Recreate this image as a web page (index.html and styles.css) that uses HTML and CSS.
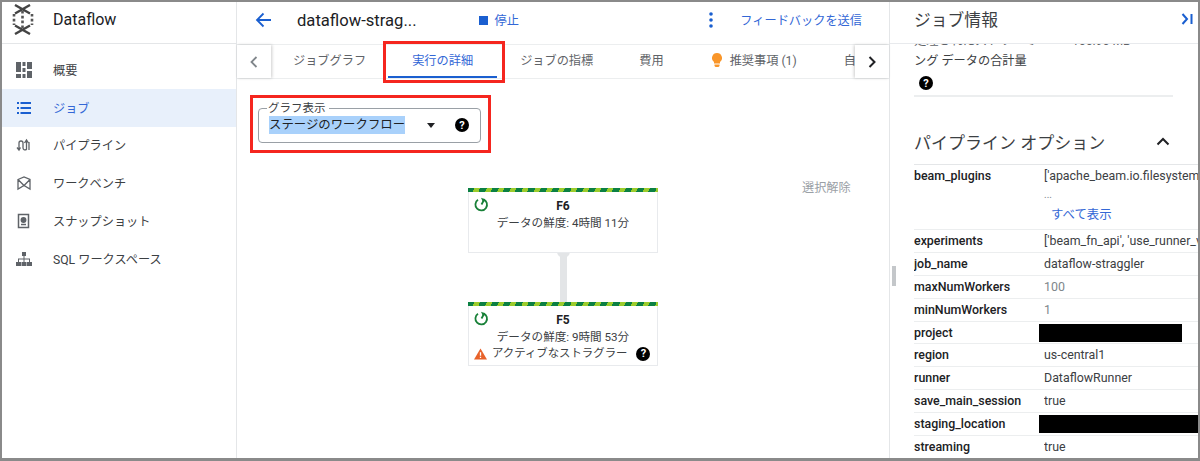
FILE: index.html
```html
<!DOCTYPE html>
<html lang="ja">
<head>
<meta charset="utf-8">
<title>Dataflow</title>
<link rel="stylesheet" href="styles.css">
</head>
<body>
<div class="frame">
  <aside class="sidebar">
    <div class="brand">
      <svg class="logo" width="22" height="31" viewBox="0 0 22 31"><path d="M3 1l15 8.500M18 1L3 9.500M3 30l15-8.500M18 30L3 21.500" stroke="#444" stroke-width="2.400" fill="none"/><path d="M2 10v11M20 10v11M10.500 7v17" stroke="#555" stroke-width="2.600" stroke-dasharray="2.600 2.200" fill="none"/></svg>
      <span class="brand-name">Dataflow</span>
    </div>
    <nav class="nav">
      <a class="nav-item"><svg width="16" height="16" viewBox="0 0 16 16" fill="#5f6368"><path d="M0 0h5v10H0zM0 12h5v4H0zM6.500 0h3v4h-3zM6.500 6h3v4h-3zM6.500 12h3v4h-3zM11 0h5v7h-5zM11 9h5v7h-5z"/></svg><span>概要</span></a>
      <a class="nav-item active"><svg width="16" height="16" viewBox="0 0 16 16" fill="#1a5fd0"><path d="M1 2h2v2H1zM1 7h2v2H1zM1 12h2v2H1zM4.500 2H15v2H4.500zM4.500 7H15v2H4.500zM4.500 12H15v2H4.500z"/></svg><span>ジョブ</span></a>
      <a class="nav-item"><svg width="16" height="16" viewBox="0 0 16 16" fill="none" stroke="#5f6368" stroke-width="1.300"><path d="M1 10.500l2 2.500 1.500-2.500M3 12V6a2 2 0 0 1 4 0v5a2 2 0 0 0 3.500 1.200V4M8.500 6l2-3 2 3"/><path d="M13 5v8"/></svg><span>パイプライン</span></a>
      <a class="nav-item"><svg width="16" height="16" viewBox="0 0 16 16" fill="none" stroke="#5f6368" stroke-width="1.300"><path d="M2 4.500L8 2l6 2.500V14L8 10.500 2 14zM2 4.500L8 10.500l6-6"/></svg><span>ワークベンチ</span></a>
      <a class="nav-item"><svg width="16" height="16" viewBox="0 0 16 16" fill="none" stroke="#5f6368" stroke-width="1.500"><rect x="2.500" y="1.500" width="10" height="13"/><circle cx="7.500" cy="7" r="2.200" fill="#5f6368"/><path d="M5 11.500h5"/></svg><span>スナップショット</span></a>
      <a class="nav-item"><svg width="16" height="16" viewBox="0 0 16 16" fill="#5f6368"><path d="M6 1h4v4H6zM7.500 5h1v3h-1zM2 7.500h12v1H2zM2 8h1v3H2zM7.500 8h1v3h-1zM13 8h1v3h-1zM0 11h5v4H0zM5.500 11h5v4h-5zM11 11h5v4h-5z"/></svg><span>SQL ワークスペース</span></a>
    </nav>
  </aside>

  <main class="main">
    <header class="topbar">
      <svg class="back" width="16" height="16" viewBox="0 0 16 16" fill="none" stroke="#1a5fd0" stroke-width="1.800"><path d="M16 8H2M8.500 1.500L2 8l6.500 6.500"/></svg>
      <h1 class="job-title">dataflow-strag...</h1>
      <span class="stop"><i class="stop-box"></i>停止</span>
      <span class="spacer"></span>
      <svg class="more" width="4" height="16" viewBox="0 0 4 16" fill="#1a5fd0"><circle cx="2" cy="2" r="1.800"/><circle cx="2" cy="8" r="1.800"/><circle cx="2" cy="14" r="1.800"/></svg>
      <span class="feedback">フィードバックを送信</span>
    </header>

    <div class="tabs">
      <div class="tab-nav left"><svg width="8" height="12" viewBox="0 0 8 12" fill="none" stroke="#80868b" stroke-width="1.800"><path d="M6.500 1L1.500 6l5 5"/></svg></div>
      <div class="tab-list">
        <span class="tab t1">ジョブグラフ</span>
        <span class="tab t2 current">実行の詳細</span>
        <span class="tab t3">ジョブの指標</span>
        <span class="tab t4">費用</span>
        <span class="tab t5"><svg width="10" height="14" viewBox="0 0 10 14" fill="#f9962a"><path d="M5 0a5 5 0 0 1 3 9v1.500H2V9a5 5 0 0 1 3-9zM2.500 11.500h5V13l-1 1h-3l-1-1z"/></svg>推奨事項 (1)</span>
        <span class="tab t6">自</span>
      </div>
      <div class="tab-nav right"><svg width="8" height="12" viewBox="0 0 8 12" fill="none" stroke="#202124" stroke-width="2"><path d="M1.500 1l5 5-5 5"/></svg></div>
    </div>

    <section class="canvas">
      <fieldset class="graph-select">
        <legend>グラフ表示</legend>
        <span class="selected">ステージのワークフロー</span>
        <i class="caret"></i>
        <span class="help help-select">?</span>
      </fieldset>
      <span class="deselect">選択解除</span>

      <div class="connector"></div>
      <article class="stage stage-f6">
        <svg class="stage-icon" width="15" height="15" viewBox="0 0 15 15" fill="none" stroke="#188038" stroke-width="1.800"><path d="M9.500 2.300A5.800 5.800 0 1 1 4 2.800M7.500 7.500L10 3"/><path d="M7 .8l4 1.500-2 3z" fill="#188038" stroke="none"/></svg>
        <div class="stage-name">F6</div>
        <div class="stage-line">データの鮮度: 4時間 11分</div>
      </article>
      <article class="stage stage-f5">
        <svg class="stage-icon" width="15" height="15" viewBox="0 0 15 15" fill="none" stroke="#188038" stroke-width="1.800"><path d="M9.500 2.300A5.800 5.800 0 1 1 4 2.800M7.500 7.500L10 3"/><path d="M7 .8l4 1.500-2 3z" fill="#188038" stroke="none"/></svg>
        <div class="stage-name">F5</div>
        <div class="stage-line">データの鮮度: 9時間 53分</div>
        <div class="stage-warn"><svg width="13" height="12" viewBox="0 0 14 12"><path d="M7 0l7 12H0z" fill="#e8622a"/><path d="M6.300 4h1.400v4H6.300zM6.300 9h1.400v1.400H6.300z" fill="#fff"/></svg><span>アクティブなストラグラー</span><span class="help help-warn">?</span></div>
      </article>

      <div class="mark mark-tab"></div>
      <div class="mark mark-select"></div>
    </section>
  </main>

  <aside class="panel">
    <i class="grip"></i>
    <header class="panel-head">
      <h2>ジョブ情報</h2>
      <svg width="12" height="12" viewBox="0 0 12 12" fill="none" stroke="#1a5fd0" stroke-width="2"><path d="M1.500 1l4.500 5-4.500 5M10.500 1v10"/></svg>
    </header>
    <div class="panel-body">
      <div class="summary">
        <div class="summary-row"><span class="summary-key">処理されたストリーミ</span><span>166.96 MB</span></div>
        <div>ング データの合計量</div>
        <span class="help help-summary">?</span>
      </div>
      <div class="opt-head">
        <h3>パイプライン オプション</h3>
        <svg width="14" height="9" viewBox="0 0 14 9" fill="none" stroke="#202124" stroke-width="2"><path d="M1.500 7.500L7 2l5.500 5.500"/></svg>
      </div>
      <dl class="options">
        <div class="row row-tall"><dt>beam_plugins</dt><dd>['apache_beam.io.filesystem<div class="dots">...</div><a class="show-all">すべて表示</a></dd></div>
        <div class="row"><dt>experiments</dt><dd>['beam_fn_api', 'use_runner_v2']</dd></div>
        <div class="row"><dt>job_name</dt><dd>dataflow-straggler</dd></div>
        <div class="row"><dt>maxNumWorkers</dt><dd class="muted">100</dd></div>
        <div class="row"><dt>minNumWorkers</dt><dd class="muted">1</dd></div>
        <div class="row"><dt>project</dt><dd class="cell-redact"><i class="redact redact-a"></i></dd></div>
        <div class="row"><dt>region</dt><dd>us-central1</dd></div>
        <div class="row"><dt>runner</dt><dd>DataflowRunner</dd></div>
        <div class="row"><dt>save_main_session</dt><dd>true</dd></div>
        <div class="row"><dt>staging_location</dt><dd class="cell-redact"><i class="redact redact-b"></i></dd></div>
        <div class="row"><dt>streaming</dt><dd>true</dd></div>
      </dl>
    </div>
  </aside>
</div>
</body>
</html>
```
FILE: styles.css
```css
* { box-sizing: border-box; }
html, body { margin: 0; height: 100%; }
body {
  font-family: Roboto, "Noto Sans CJK JP", sans-serif;
  font-size: 12.2px;
  color: #3c4043;
  background: #fff;
  overflow: hidden;
}
h1, h2, h3, dl, dd { margin: 0; font-weight: 400; }

.frame {
  display: flex;
  width: 1200px;
  height: 461px;
  border: solid #8a8a8a;
  border-width: 2px 2px 3px 2px;
  overflow: hidden;
}

/* sidebar */
.sidebar { flex: 0 0 235px; border-right: 1px solid #e4e6e8; }
.brand { display: flex; align-items: center; height: 42px; border-bottom: 1px solid #e4e6e8; padding: 0 0 6px 10px; }
.logo { flex: none; }
.brand-name { margin-left: 19px; font-size: 16px; color: #202124; }
.nav { padding-top: 7px; }
.nav-item { display: flex; align-items: center; gap: 21px; height: 37.8px; padding-left: 14px; color: #3c4043; }
.nav-item svg { flex: none; }
.nav-item.active { background: #e8f0fb; color: #3367d6; }

/* main */
.main { flex: 0 0 653px; border-right: 1px solid #e4e6e8; display: flex; flex-direction: column; min-width: 0; }
.topbar { display: flex; align-items: center; height: 42px; padding: 0 0 6px 18px; flex: none; }
.back { flex: none; }
.job-title { margin-left: 26px; font-size: 16.6px; color: #202124; white-space: nowrap; }
.stop { margin-left: 62px; display: flex; align-items: center; gap: 7px; color: #3367d6; }
.stop-box { width: 9px; height: 9px; background: #1a5fd0; }
.spacer { flex: 1; }
.more { flex: none; }
.feedback { margin-left: 27px; margin-right: 27px; color: #3367d6; }

.tabs { display: flex; align-items: stretch; height: 35px; flex: none; border-top: 1px solid #eceeef; border-bottom: 1px solid #eceeef; }
.tab-nav { flex: none; width: 34px; display: flex; align-items: center; justify-content: center; background: #fff; }
.tab-nav.left { box-shadow: 1px 0 3px rgba(0,0,0,.2); }
.tab-nav.right { box-shadow: -1px 0 3px rgba(0,0,0,.2); }
.tab-list { flex: 1; display: flex; align-items: center; overflow: hidden; white-space: nowrap; color: #5f6368; }
.tab { display: flex; align-items: center; gap: 8px; flex: none; height: 100%; padding-bottom: 3px; }
.t1 { margin-left: 22px; }
.t2 { margin-left: 22px; width: 109px; justify-content: center; color: #3367d6; border-bottom: 2px solid #1a5fd0; padding-bottom: 1px; }
.t3 { margin-left: 23px; }
.t4 { margin-left: 46px; }
.t5 { margin-left: 48px; }
.t6 { margin-left: 47px; }

.canvas { position: relative; flex: 1; }
.graph-select {
  position: absolute; left: 21px; top: 24px;
  width: 223px; height: 40px; margin: 0; padding: 0 8px;
  border: 1px solid #9aa0a6; border-radius: 4px;
  color: #202124;
}
.graph-select legend { padding: 0 3px 0 1px; font-size: 11.5px; line-height: 10px; color: #3c4043; }
.selected { position: absolute; left: 10px; top: 3px; display: inline-block; background: #a9d1fb; line-height: 18px; font-size: 12.4px; white-space: nowrap; }
.caret { position: absolute; left: 168px; top: 9.5px; border: solid transparent; border-width: 5px 4.5px 0; border-top-color: #202124; }
.help {
  display: inline-flex; align-items: center; justify-content: center;
  width: 14px; height: 14px; border-radius: 50%; background: #000; color: #fff;
  font-size: 11px; font-weight: 700; line-height: 1; flex: none;
}
.help-select { position: absolute; left: 196px; top: 5px; }
.deselect { position: absolute; left: 565px; top: 99px; color: #9aa0a6; }

.stage {
  position: absolute; left: 231px; width: 190px; height: 64px;
  background: #fff; border: 1px solid #e8eaed; border-top: 0;
  text-align: center; color: #3c4043; font-size: 11.6px;
}
.stage::before {
  content: ""; display: block; height: 4px; margin: 0 -1px;
  background: repeating-linear-gradient(115deg, #0b8043 0 6px, #9ccc2c 6px 11px);
}
.stage-f6 { top: 109px; height: 65px; }
.stage-f5 { top: 223px; }
.stage-icon { position: absolute; left: 5px; top: 9px; }
.stage-name { margin-top: 7px; font-size: 12px; font-weight: 700; color: #202124; line-height: 15px; }
.stage-line { margin-top: 1px; line-height: 17px; }
.stage-warn { display: flex; align-items: center; gap: 5px; margin-top: -1px; padding-left: 5px; line-height: 17px; font-size: 11.4px; white-space: nowrap; }
.help-warn { margin-left: 4px; }
.connector { position: absolute; left: 323px; top: 172px; width: 7px; height: 52px; background: #e3e5e7; border-radius: 4px 4px 0 0; }
.connector::before { content: ""; position: absolute; left: -3px; top: 0; width: 13px; height: 7px; background: #e3e5e7; border-radius: 0 0 7px 7px; }

.mark { position: absolute; border: 3px solid #f5261f; pointer-events: none; }
.mark-tab { left: 146px; top: -38px; width: 122px; height: 42px; }
.mark-select { left: 13px; top: 16px; width: 241px; height: 58px; }

/* right panel */
.panel { flex: 1; position: relative; display: flex; flex-direction: column; min-width: 0; overflow: hidden; }
.grip { position: absolute; left: 2px; top: 264px; width: 3.5px; height: 20px; background: #c4c7ca; }
.panel-head { flex: none; display: flex; align-items: center; justify-content: space-between; height: 42px; padding: 0 5px 7px 24px; border-bottom: 1px solid #e8eaed; background: #fff; }
.panel-head h2 { font-size: 16.8px; color: #3c4043; }
.panel-body { flex: 1; padding-left: 24px; overflow: hidden; }
.summary { width: 259px; height: 66px; margin-top: -13px; border-bottom: 2px solid #eceeef; line-height: 20px; color: #3c4043; }
.summary-row { display: flex; color: #5f6368; white-space: nowrap; }
.summary-key { width: 158px; flex: none; }
.help-summary { display: flex; margin: 5px 0 0 5px; }
.opt-head { display: flex; align-items: center; justify-content: space-between; height: 67px; width: 260px; padding: 21px 4px 0 0; }
.opt-head h3 { font-size: 17px; color: #3c4043; white-space: nowrap; }
.options { border-top: 1px solid #e4e6e8; width: 285px; font-size: 12.4px; }
.row { display: grid; grid-template-columns: 130px 1fr; height: 22.9px; line-height: 22px; border-bottom: 1px solid #eceeef; white-space: nowrap; overflow: hidden; }
.row-tall { height: 65px; }
.row dt { font-weight: 500; color: #202124; }
.row dd { overflow: hidden; color: #3c4043; }
.dots { line-height: 16px; color: #80868b; font-size: 10px; }
.show-all { display: block; margin: 3px 0 0 7px; color: #3367d6; line-height: 17px; }
.row dd.muted { color: #80868b; }
.row dd.cell-redact { overflow: visible; margin-left: -5px; }
.redact { display: block; height: 18px; margin-top: 2px; background: #000; }
.redact-a { width: 143px; }
.redact-b { width: 160px; }
```
